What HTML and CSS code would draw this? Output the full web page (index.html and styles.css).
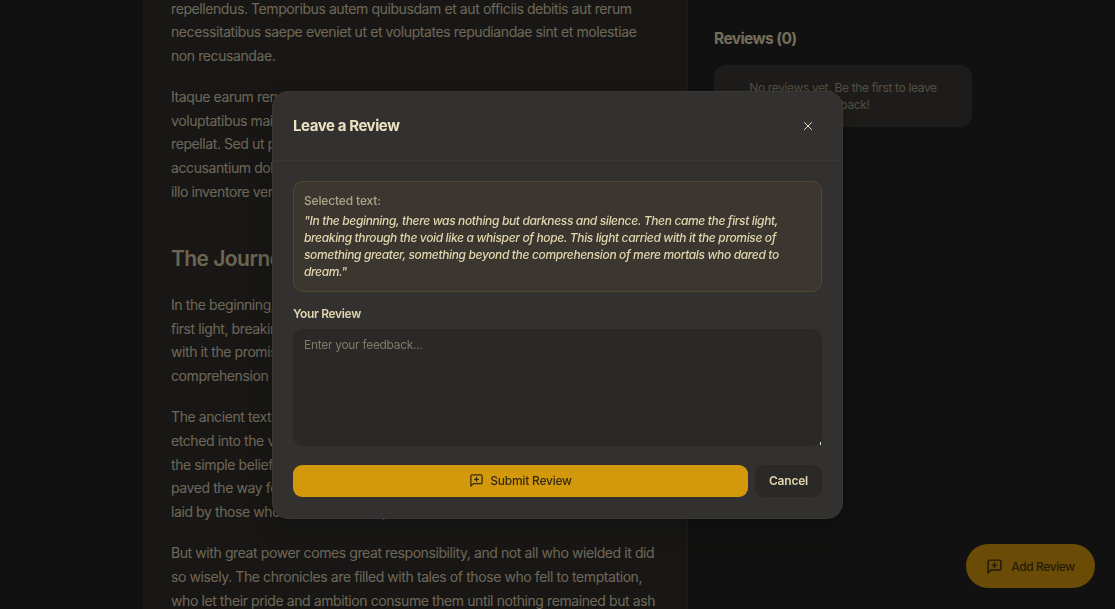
FILE: index.html
```html
<!DOCTYPE html>
<html lang="en">
<head>
<meta charset="utf-8">
<title>Leave a Review</title>
<link rel="stylesheet" href="styles.css">
</head>
<body>
<div class="page">
  <main class="article">
    <p>repellendus. Temporibus autem quibusdam et aut officiis debitis aut rerum<br>necessitatibus saepe eveniet ut et voluptates repudiandae sint et molestiae<br>non recusandae.</p>
    <p>Itaque earum rerum hic tenetur a sapiente delectus, ut aut reiciendis<br>voluptatibus maiores alias consequatur aut perferendis doloribus asperiores<br>repellat. Sed ut perspiciatis unde omnis iste natus error sit voluptatem<br>accusantium doloremque laudantium, totam rem aperiam, eaque ipsa quae ab<br>illo inventore veritatis et quasi architecto beatae vitae dicta sunt.</p>
    <h2>The Journey Begins</h2>
    <p>In the beginning, there was nothing but darkness and silence. Then came the<br>first light, breaking through the void like a whisper of hope. This light carried<br>with it the promise of something greater, something beyond the<br>comprehension of mere mortals who dared to dream.</p>
    <p>The ancient texts speak of a time when the world was young, when magic was<br>etched into the very fabric of existence. Those who came before held fast to<br>the simple belief that knowledge was power, and their discoveries<br>paved the way for generations to come, building on the foundations<br>laid by those who had walked the path before them.</p>
    <p>But with great power comes great responsibility, and not all who wielded it did<br>so wisely. The chronicles are filled with tales of those who fell to temptation,<br>who let their pride and ambition consume them until nothing remained but ash</p>
  </main>
  <aside class="sidebar">
    <h3>Reviews (0)</h3>
    <div class="empty">No reviews yet. Be the first to leave feedback!</div>
  </aside>
</div>
<button class="fab" type="button">
  <svg class="icon-lg" viewBox="0 0 24 24" aria-hidden="true"><path d="M21 15a2 2 0 0 1-2 2H7l-4 4V5a2 2 0 0 1 2-2h14a2 2 0 0 1 2 2z"/><path d="M12 7v6"/><path d="M9 10h6"/></svg>
  Add Review
</button>
<div class="overlay">
  <section class="modal">
    <header class="modal-head">
      <h2>Leave a Review</h2>
      <svg class="close" viewBox="0 0 24 24" aria-hidden="true"><path d="M18 6 6 18"/><path d="m6 6 12 12"/></svg>
    </header>
    <div class="modal-body">
      <div class="selected">
        <div class="selected-label">Selected text:</div>
        <div class="selected-quote">"In the beginning, there was nothing but darkness and silence. Then came the first light, breaking through the void like a whisper of hope. This light carried with it the promise of something greater, something beyond the comprehension of mere mortals who dared to dream."</div>
      </div>
      <label class="field-label" for="review">Your Review</label>
      <textarea class="field" id="review" placeholder="Enter your feedback..."></textarea>
      <div class="actions">
        <button class="submit" type="button">
          <svg class="icon-sm" viewBox="0 0 24 24" aria-hidden="true"><path d="M21 15a2 2 0 0 1-2 2H7l-4 4V5a2 2 0 0 1 2-2h14a2 2 0 0 1 2 2z"/><path d="M12 7v6"/><path d="M9 10h6"/></svg>
          Submit Review
        </button>
        <button class="cancel" type="button">Cancel</button>
      </div>
    </div>
  </section>
</div>
</body>
</html>
```
FILE: styles.css
```css
* { box-sizing: border-box; }
html, body { margin: 0; height: 100%; }
body {
  background: #242322;
  color: #f0e6d2;
  font-family: Inter, "Noto Sans", sans-serif;
  overflow: hidden;
}
.page {
  display: flex;
  height: 609px;
  overflow: hidden;
  padding-left: 143px;
}
.article {
  width: 545px;
  height: 700px;
  margin-top: -3.5px;
  padding: 0 28px;
  background: #302e2c;
  border-right: 1px solid #383632;
  color: #dccfb0;
  flex: none;
}
.article p {
  margin: 0 0 17px;
  font-size: 14px;
  line-height: 23.8px;
  letter-spacing: -.41px;
  white-space: nowrap;
}
.article h2 {
  margin: 39px 0 18px;
  font-size: 21px;
  line-height: 32px;
  font-weight: 600;
  letter-spacing: -.55px;
  color: #d8cba4;
}
.sidebar {
  width: 258px;
  margin-left: 26px;
  padding-top: 28px;
  flex: none;
}
.sidebar h3 {
  margin: 0 0 15px;
  font-size: 15.5px;
  line-height: 22px;
  font-weight: 700;
  letter-spacing: -.6px;
  color: #e6dab6;
}
.empty {
  background: #3b3936;
  border-radius: 12px;
  padding: 14px 24px;
  height: 62px;
  text-align: center;
  font-size: 12px;
  line-height: 17px;
  letter-spacing: -.35px;
  color: #a89e84;
}
.fab {
  position: fixed;
  right: 20px;
  bottom: 21px;
  width: 129px;
  height: 44px;
  border: 0;
  border-radius: 22px;
  background: #d4980c;
  color: #4a3a12;
  font: 500 12px Inter, sans-serif;
  letter-spacing: -.4px;
  display: flex;
  align-items: center;
  justify-content: center;
  gap: 8px;
}
.icon-lg, .icon-sm, .close {
  fill: none;
  stroke: currentColor;
  stroke-width: 2;
  stroke-linecap: round;
  stroke-linejoin: round;
}
.icon-lg { width: 17px; height: 17px; color: #3f3211; }
.icon-sm { width: 15px; height: 15px; }
.overlay {
  position: fixed;
  inset: 0;
  background: rgba(0, 0, 0, .5);
  display: flex;
  align-items: center;
  justify-content: center;
}
.modal {
  width: 571px;
  height: 428px;
  background: #323130;
  border: 1px solid #393836;
  border-radius: 16px;
  box-shadow: 0 10px 30px rgba(0, 0, 0, .2);
}
.modal-head {
  height: 69px;
  padding: 0 20px;
  display: flex;
  align-items: center;
  justify-content: space-between;
  border-bottom: 1px solid #383735;
}
.modal-head h2 {
  margin: 0;
  font-size: 15px;
  font-weight: 700;
  letter-spacing: -.42px;
  color: #ece2c2;
}
.close { width: 14px; height: 14px; color: #ece2c2; margin-right: 7px; stroke-width: 1.7; }
.modal-body { padding: 20px 20px 0; }
.selected {
  height: 111px;
  background: #3b3730;
  border: 1px solid #54462a;
  border-radius: 10px;
  padding: 10px 10px;
}
.selected-label {
  font-size: 12px;
  line-height: 17px;
  font-weight: 500;
  letter-spacing: -.15px;
  color: #aea48c;
}
.selected-quote {
  margin-top: 3px;
  font-size: 12px;
  line-height: 17px;
  font-style: italic;
  font-weight: 500;
  letter-spacing: -.36px;
  color: #e2d6ae;
}
.field-label {
  display: block;
  margin-top: 13px;
  font-size: 12px;
  line-height: 17px;
  font-weight: 600;
  letter-spacing: -.33px;
  color: #e2d6ae;
}
.field {
  display: block;
  width: 100%;
  height: 117px;
  margin-top: 7px;
  padding: 7px 11px;
  background: #2a2928;
  border: 0;
  border-radius: 10px;
  outline: 0;
  font: 12px/17px Inter, sans-serif;
  letter-spacing: -.3px;
  color: #e2d6ae;
}
.field::placeholder { color: #7f7966; opacity: 1; }
.field::-webkit-resizer {
  background: linear-gradient(#d8d8d8, #d8d8d8) no-repeat right 1px bottom 1px / 1px 3px;
}
.actions { display: flex; gap: 7px; margin-top: 19px; }
.submit, .cancel {
  height: 32px;
  border: 0;
  border-radius: 9px;
  font: 500 12px Inter, sans-serif;
  letter-spacing: -.22px;
  display: flex;
  align-items: center;
  justify-content: center;
}
.submit { flex: 1; gap: 6px; background: #d4980c; color: #332b10; }
.cancel { width: 67px; background: #2a2928; color: #e2d6ae; font-weight: 600; }
```
